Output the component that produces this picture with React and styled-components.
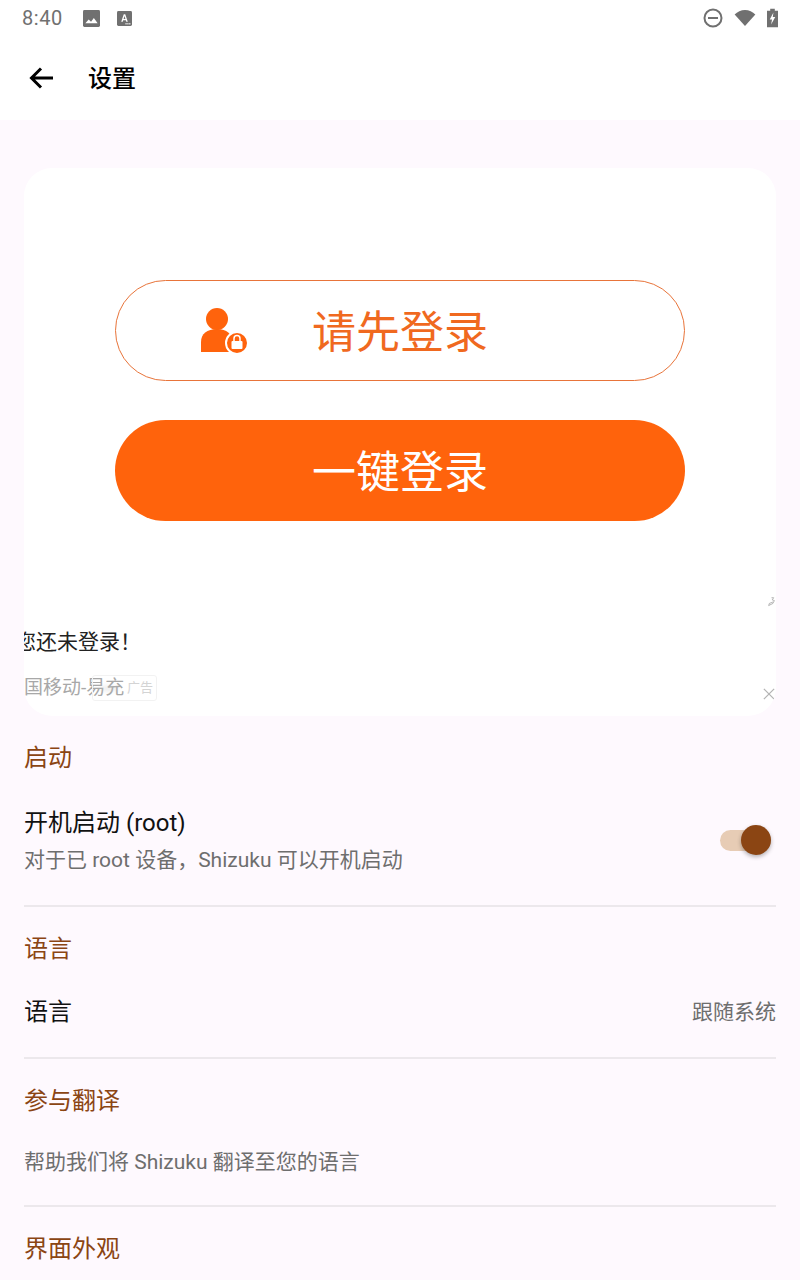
import React from 'react';
import styled, { createGlobalStyle } from 'styled-components';

const GlobalStyle = createGlobalStyle`
  html, body {
    margin: 0;
    padding: 0;
    background: #fef9fe;
    font-family: Roboto, "Noto Sans CJK SC", sans-serif;
  }
  * { box-sizing: border-box; }
`;

const Page = styled.div`
  width: 800px;
  height: 1280px;
  overflow: hidden;
  background: #fef9fe;
`;

const Header = styled.header`
  background: #fff;
  height: 120px;
`;

const StatusBar = styled.div`
  height: 36px;
  padding: 0 22px;
  display: flex;
  align-items: center;
  color: #707070;
`;

const Clock = styled.span`
  font-size: 20px;
  letter-spacing: 0.6px;
  margin-right: 3px;
`;

const StatusLeft = styled.div`
  display: flex;
  align-items: center;
  gap: 17px;
  flex: 1;
`;

const StatusRight = styled.div`
  display: flex;
  align-items: center;
  gap: 11px;
`;

const AppBar = styled.div`
  height: 84px;
  display: flex;
  align-items: center;
  padding-left: 28px;
`;

const BackButton = styled.div`
  width: 60px;
  height: 28px;
  display: flex;
  align-items: center;
`;

const Title = styled.h1`
  margin: 0 0 4px;
  font-size: 24px;
  font-weight: 500;
  color: #000;
`;

const Content = styled.main`
  padding: 48px 24px 0;
`;

const AdCard = styled.section`
  height: 548px;
  background: #fff;
  border-radius: 28px;
  overflow: hidden;
  display: flex;
  flex-direction: column;
  position: relative;
`;

const AdImage = styled.div`
  height: 443px;
  padding-top: 112px;
  display: flex;
  flex-direction: column;
  align-items: center;
  gap: 39px;
  position: relative;
`;

const PillButton = styled.div`
  width: 570px;
  height: 101px;
  padding-bottom: 4px;
  border-radius: 51px;
  display: flex;
  align-items: center;
  justify-content: center;
  font-size: 44px;
  position: relative;
  color: ${(p) => (p.$filled ? '#fff' : '#f0691f')};
  background: ${(p) => (p.$filled ? '#ff630c' : '#fff')};
  border: ${(p) => (p.$filled ? 'none' : '1.5px solid #e8743a')};
`;

const UserMark = styled.svg`
  position: absolute;
  left: 84px;
  top: 26px;
`;

const Squiggle = styled.svg`
  position: absolute;
  right: 0;
  bottom: 4px;
`;

const AdText = styled.div`
  margin: 16px 0 0 -9px;
  font-size: 21px;
  line-height: 30px;
  color: #222;
  white-space: nowrap;
`;

const AdMeta = styled.div`
  margin: 17px 0 0 -19px;
  font-size: 19px;
  line-height: 28px;
  color: #a8a8a8;
  white-space: nowrap;
`;

const AdTag = styled.span`
  position: absolute;
  left: 68px;
  bottom: 15px;
  width: 65px;
  height: 26px;
  padding-right: 3px;
  border: 1px solid #f2f2f2;
  border-radius: 3px;
  font-size: 13px;
  line-height: 24px;
  color: #d4d4d4;
  text-align: right;

  &::before {
    content: '';
    position: absolute;
    left: 6px;
    top: 10px;
    width: 20px;
    height: 5px;
    border-radius: 50%;
    background: #c4c4c4;
    opacity: 0.35;
    filter: blur(2px);
  }
`;

const CloseMark = styled.svg`
  position: absolute;
  right: 1px;
  bottom: 16px;
`;

const Section = styled.section`
  border-bottom: ${(p) => (p.$last ? 'none' : '2px solid #ece8ec')};
`;

const SectionTitle = styled.h2`
  margin: ${(p) => p.$top}px 0 0;
  font-size: 24px;
  line-height: 32px;
  font-weight: 400;
  color: #8b4513;
`;

const Row = styled.div`
  display: flex;
  align-items: center;
  justify-content: space-between;
  padding: ${(p) => p.$pad};
`;

const RowText = styled.div`
  display: flex;
  flex-direction: column;
  gap: 5px;
`;

const RowTitle = styled.div`
  font-size: 24px;
  line-height: 34px;
  color: #111;
`;

const Summary = styled.div`
  font-size: 21px;
  line-height: 30px;
  color: #6e6e6e;
`;

const Value = styled.div`
  margin-bottom: 4px;
  font-size: 21px;
  color: #6e6e6e;
`;

const Toggle = styled.div`
  width: 51px;
  height: 21px;
  margin-bottom: 1px;
  border-radius: 11px;
  background: #e7ccb5;
  position: relative;
`;

const Knob = styled.div`
  position: absolute;
  right: 0;
  top: -5px;
  width: 30px;
  height: 30px;
  border-radius: 50%;
  background: #8b4513;
  box-shadow: 0 2px 4px rgba(0, 0, 0, 0.3);
`;

const ImageIcon = () => (
  <svg width="17" height="17" viewBox="0 0 18 18">
    <rect width="18" height="18" rx="1.500" fill="#707070" />
    <path d="M2.500 14l3.500-4 2.500 2.500 3-4 4 5.500z" fill="#fff" />
  </svg>
);

const TextIcon = () => (
  <svg width="15" height="15" viewBox="0 0 16 16">
    <rect width="16" height="16" rx="1.500" fill="#707070" />
    <path d="M4.500 11.500L7.200 3.500h1.600l2.700 8h-1.600l-.5-1.700H6.600l-.5 1.700zM7 8.500h2L8 5.200z" fill="#fff" />
    <rect x="9" y="13" width="1.300" height="1.300" fill="#fff" />
    <rect x="11" y="13" width="1.300" height="1.300" fill="#fff" />
    <rect x="13" y="13" width="1.300" height="1.300" fill="#fff" />
  </svg>
);

const DndIcon = () => (
  <svg width="20" height="20" viewBox="0 0 20 20">
    <circle cx="10" cy="10" r="8.500" fill="none" stroke="#707070" strokeWidth="2" />
    <rect x="5" y="9" width="10" height="2" fill="#707070" />
  </svg>
);

const WifiIcon = () => (
  <svg width="22" height="18" viewBox="0 0 24 20">
    <path d="M0.500 6C3.500 3 7.500 1 12 1s8.500 2 11.500 5L12 19z" fill="#707070" />
  </svg>
);

const BatteryIcon = () => (
  <svg width="11" height="20" viewBox="0 0 12 20">
    <path d="M3.500 0h5v2H12v18H0V2h3.500z" fill="#707070" />
    <path d="M7 4L3 11.500h2.500L4.500 17 9 9H6.300z" fill="#fff" />
  </svg>
);

const BackArrow = () => (
  <svg width="28" height="28" viewBox="0 0 28 28">
    <path d="M25 14H4M13 4.500L3.500 14l9.500 9.500" fill="none" stroke="#000" strokeWidth="3" />
  </svg>
);

const App = () => (
  <>
    <GlobalStyle />
    <Page>
      <Header>
        <StatusBar>
          <StatusLeft>
            <Clock>8:40</Clock>
            <ImageIcon />
            <TextIcon />
          </StatusLeft>
          <StatusRight>
            <DndIcon />
            <WifiIcon />
            <BatteryIcon />
          </StatusRight>
        </StatusBar>
        <AppBar>
          <BackButton>
            <BackArrow />
          </BackButton>
          <Title>设置</Title>
        </AppBar>
      </Header>
      <Content>
        <AdCard>
          <AdImage>
            <PillButton>
              <UserMark width="50" height="48" viewBox="0 0 50 48">
                <circle cx="17" cy="12" r="11" fill="#ff630c" />
                <path d="M1 45V35c0-8 6-13 16-13s15 5 15 13v10z" fill="#ff630c" />
                <circle cx="37" cy="36" r="11" fill="#ff630c" stroke="#fff" strokeWidth="2" />
                <rect x="31.500" y="34" width="11" height="8" rx="1" fill="#fff" />
                <path d="M34 34v-2.500a3 3 0 0 1 6 0V34" fill="none" stroke="#fff" strokeWidth="1.500" />
              </UserMark>
              请先登录
            </PillButton>
            <PillButton $filled>一键登录</PillButton>
            <Squiggle width="9" height="10" viewBox="0 0 10 14">
              <path d="M5 1h3L6 4l3 1-2 4-6 3 1-3 5-2" fill="none" stroke="#999" strokeWidth="1" />
            </Squiggle>
          </AdImage>
          <AdText>您还未登录！</AdText>
          <AdMeta>中国移动-易充</AdMeta>
          <AdTag>广告</AdTag>
          <CloseMark width="12" height="12" viewBox="0 0 14 14">
            <path d="M1 1l12 12M13 1L1 13" fill="none" stroke="#b5b5b5" strokeWidth="1.500" />
          </CloseMark>
        </AdCard>
        <Section>
          <SectionTitle $top={26}>启动</SectionTitle>
          <Row $pad="32px 5px 30px 0">
            <RowText>
              <RowTitle>开机启动 (root)</RowTitle>
              <Summary>对于已 root 设备，Shizuku 可以开机启动</Summary>
            </RowText>
            <Toggle>
              <Knob />
            </Toggle>
          </Row>
        </Section>
        <Section>
          <SectionTitle $top={26}>语言</SectionTitle>
          <Row $pad="30px 0 28px">
            <RowTitle>语言</RowTitle>
            <Value>跟随系统</Value>
          </Row>
        </Section>
        <Section>
          <SectionTitle $top={26}>参与翻译</SectionTitle>
          <Row $pad="30px 0 28px">
            <Summary>帮助我们将 Shizuku 翻译至您的语言</Summary>
          </Row>
        </Section>
        <Section $last>
          <SectionTitle $top={26}>界面外观</SectionTitle>
        </Section>
      </Content>
    </Page>
  </>
);

export default App;
